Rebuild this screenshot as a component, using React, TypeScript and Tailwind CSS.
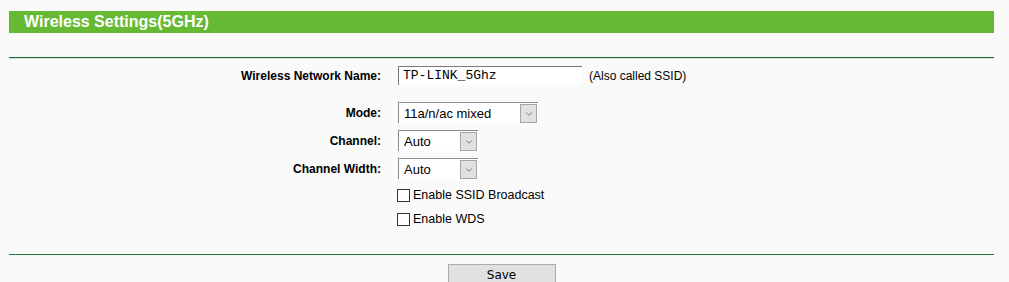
import { ChevronDown } from 'lucide-react';

function FakeSelect({ value, width }: { value: string; width: string }) {
  return (
    <div className={`flex h-[21px] ${width} border-t border-l border-[#8a8a8a] bg-white`}>
      <span className="flex-1 pl-[5px] text-[13px] leading-[21px] text-black">{value}</span>
      <span className="mt-[1px] mr-[1px] flex h-[19px] w-[17px] items-center justify-center border border-[#a6a6a6] bg-[#e1e1e1]">
        <ChevronDown className="h-[10px] w-[10px] text-[#333]" strokeWidth={1.5} />
      </span>
    </div>
  );
}

function Row({ label, children, className }: { label?: string; children: React.ReactNode; className: string }) {
  return (
    <div className={`flex items-center ${className}`}>
      <div className="w-[372px] text-right text-[12px] font-bold text-black">{label}</div>
      <div className="ml-[17px] flex items-center">{children}</div>
    </div>
  );
}

function Check({ label }: { label: string }) {
  return (
    <label className="flex items-center gap-[3px] text-[12.5px] text-black">
      <span className="h-[13px] w-[13px] border border-[#333] bg-white" />
      {label}
    </label>
  );
}

export default function App() {
  return (
    <div className="h-[282px] w-[1009px] overflow-hidden bg-[#fafafa] px-[9px] pt-[11px] font-['Liberation_Sans',Arial,sans-serif]">
      <div className="w-[985px]">
        <div className="h-[22px] bg-[#66b933] pl-[15px] text-[16px] font-bold leading-[22px] text-white">
          Wireless Settings(5GHz)
        </div>
        <div className="mt-[24px] border-t border-b border-t-[#1f6b3e] border-b-[#d4e3d8]" />

        <Row label="Wireless Network Name:" className="mt-[7px] h-[19px]">
          <div className="h-[19px] w-[184px] border-t border-l border-[#7a7a7a] bg-white pl-[4px] font-['Liberation_Mono','Courier_New',monospace] text-[13px] leading-[18px] text-black">
            TP-LINK_5Ghz
          </div>
          <span className="ml-[7px] text-[12px] text-black">(Also called SSID)</span>
        </Row>
        <Row label="Mode:" className="mt-[17px] h-[21px]">
          <FakeSelect value="11a/n/ac mixed" width="w-[140px]" />
        </Row>
        <Row label="Channel:" className="mt-[7px] h-[21px]">
          <FakeSelect value="Auto" width="w-[80px]" />
        </Row>
        <Row label="Channel Width:" className="mt-[7px] h-[21px]">
          <FakeSelect value="Auto" width="w-[80px]" />
        </Row>
        <Row className="mt-[8px] h-[17px]">
          <div className="-ml-[1px]">
            <Check label="Enable SSID Broadcast" />
          </div>
        </Row>
        <Row className="mt-[7px] h-[17px]">
          <div className="-ml-[1px]">
            <Check label="Enable WDS" />
          </div>
        </Row>

        <div className="mt-[26px] border-t border-[#1f7a3a]" />
        <div className="mt-[9px] flex justify-center">
          <button className="h-[22px] w-[108px] border border-[#adadad] bg-[#e1e1e1] font-['DejaVu_Sans',Tahoma,sans-serif] text-[12px] text-black">
            Save
          </button>
        </div>
      </div>
    </div>
  );
}
